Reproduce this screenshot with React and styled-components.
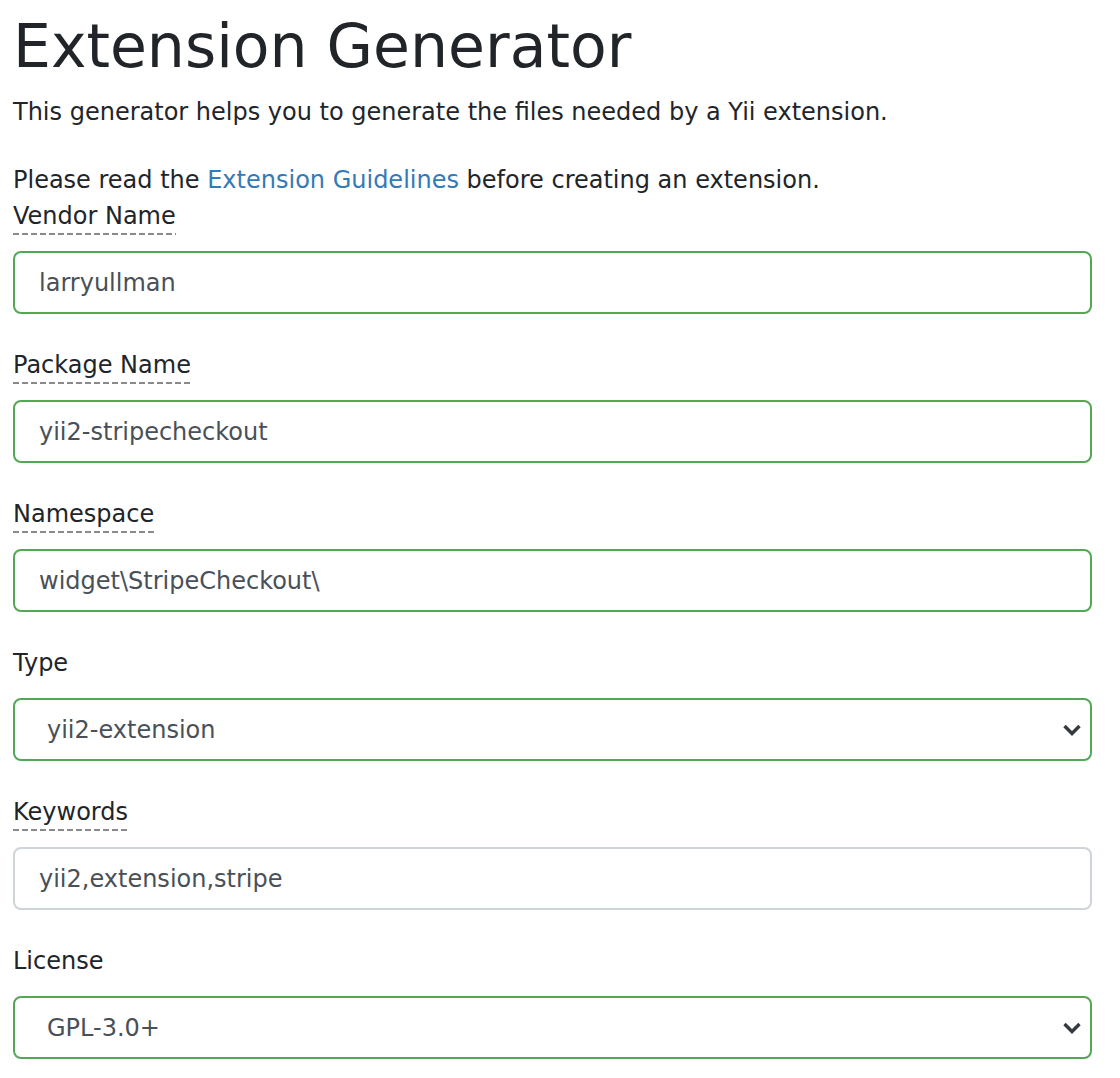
import styled, { createGlobalStyle } from "styled-components";

const Global = createGlobalStyle`
  body {
    margin: 0;
    background: #fff;
    font-family: "DejaVu Sans", Verdana, sans-serif;
    color: #212529;
  }
`;

const Page = styled.div`
  padding: 10px 28px 0 13px;
`;

const Title = styled.h1`
  margin: 0;
  font-size: 60px;
  font-weight: 400;
  line-height: 72px;
`;

const Lead = styled.p`
  margin: 12px 0 0;
  font-size: 24px;
  line-height: 36px;
`;

const Note = styled.p`
  margin: 32px 0 0;
  font-size: 24px;
  line-height: 36px;

  a {
    color: #337ab7;
    text-decoration: none;
  }
`;

const Group = styled.div`
  margin-bottom: 33px;
`;

const Label = styled.label`
  display: inline-block;
  font-size: 24px;
  line-height: 36px;
  padding-bottom: 1px;
  margin-bottom: 16px;
  background: ${(p) =>
    p.$hint
      ? "repeating-linear-gradient(to right, #8a8a8a 0 6px, transparent 6px 9px) left bottom / 100% 2px no-repeat"
      : "none"};
`;

const Field = styled.div`
  position: relative;
  display: flex;
  align-items: center;
  height: 63px;
  box-sizing: border-box;
  padding: 0 24px;
  border: 2px solid ${(p) => (p.$valid ? "#54a754" : "#ced4da")};
  border-radius: 8px;
  font-size: 24px;
  color: #495057;
  background: #fff;
`;

const SelectField = styled(Field)`
  padding-left: 32px;
`;

const Chevron = styled.svg`
  position: absolute;
  right: 8px;
  top: 50%;
  transform: translateY(-50%);
`;

const fields = [
  { label: "Vendor Name", value: "larryullman", hint: true, valid: true },
  { label: "Package Name", value: "yii2-stripecheckout", hint: true, valid: true },
  { label: "Namespace", value: "widget\\StripeCheckout\\", hint: true, valid: true },
  { label: "Type", value: "yii2-extension", select: true, valid: true },
  { label: "Keywords", value: "yii2,extension,stripe", hint: true },
  { label: "License", value: "GPL-3.0+", select: true, valid: true },
];

export default function App() {
  return (
    <Page>
      <Global />
      <Title>Extension Generator</Title>
      <Lead>This generator helps you to generate the files needed by a Yii extension.</Lead>
      <Note>
        Please read the <a href="#">Extension Guidelines</a> before creating an extension.
      </Note>
      {fields.map((f) => {
        const Box = f.select ? SelectField : Field;
        return (
          <Group key={f.label}>
            <Label $hint={f.hint}>{f.label}</Label>
            <Box $valid={f.valid}>
              {f.value}
              {f.select && (
                <Chevron width="20" height="13" viewBox="0 0 20 13">
                  <path d="M2.5 2.5l7.5 7.5 7.5-7.5" fill="none" stroke="#343a40" strokeWidth="3.4" />
                </Chevron>
              )}
            </Box>
          </Group>
        );
      })}
    </Page>
  );
}
